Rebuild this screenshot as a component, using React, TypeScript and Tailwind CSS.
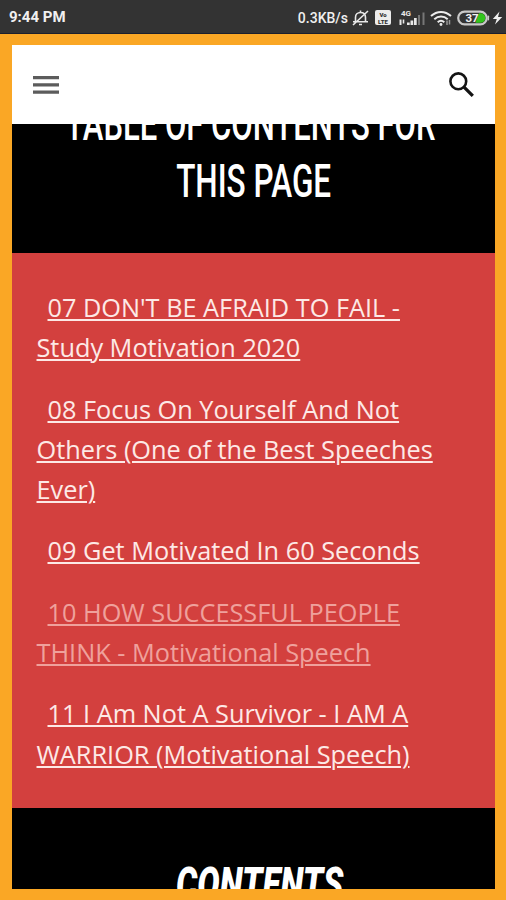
type Entry = { lines: string[]; visited?: boolean };

const entries: Entry[] = [
  { lines: ["07 DON'T BE AFRAID TO FAIL -", 'Study Motivation 2020'] },
  { lines: ['08 Focus On Yourself And Not', 'Others (One of the Best Speeches', 'Ever)'] },
  { lines: ['09 Get Motivated In 60 Seconds'] },
  { lines: ['10 HOW SUCCESSFUL PEOPLE', 'THINK - Motivational Speech'], visited: true },
  { lines: ['11 I Am Not A Survivor - I AM A', 'WARRIOR (Motivational Speech)'] },
];

function StatusBar() {
  return (
    <div className="flex h-[34px] shrink-0 items-center border-b border-[#1c1f2c] bg-[#333333] pl-[9px] pr-[3px] pt-[2px] font-[Roboto,sans-serif] text-[#f0f0f0]">
      <span className="text-[15px] font-bold leading-none">9:44 PM</span>
      <span className="ml-auto text-[14px] font-medium leading-none">0.3KB/s</span>
      <svg className="ml-[3px]" width="19" height="18" viewBox="0 0 19 18" fill="none" stroke="#e8e8e8" strokeWidth="1.6">
        <path d="M4.5 12.5V8.5c0-3 2-5 5-5s5 2 5 5v4M2 12.8h15M8 15.5h3M9.5 1.5v2M17 2L2 16" />
      </svg>
      <div className="ml-[5px] flex h-[15px] w-[16px] flex-col items-center justify-center rounded-[2px] bg-[#ececec] text-[6px] font-black leading-[7px] text-[#333333]">
        <span>Vo</span>
        <span>LTE</span>
      </div>
      <svg className="ml-[7px]" width="29" height="18" viewBox="0 0 29 18" fill="#e8e8e8">
        <text x="3" y="7" fontSize="8" fontWeight="700" fontFamily="Roboto">4G</text>
        <path d="M1.5 10.5h2V16h-2zM4.7 10.5h1.6v4H4.7zM9 13.5h2.7V16H9zM12.500 11.5h2.7V16h-2.700zM16 9h2.700v7H16z" />
        <path d="M20 6h2v10h-2zM24.500 3.5h2V16h-2z" fill="#777777" />
      </svg>
      <svg className="ml-[3px]" width="23" height="18" viewBox="0 0 23 18" fill="none" stroke="#ececec" strokeWidth="2">
        <path d="M1 7C7 1.5 15 1.5 21 7M4.3 10.2c3.9-3.5 9.5-3.5 13.4 0M7.7 13.2c2-1.8 4.6-1.8 6.6 0" />
        <circle cx="11" cy="15.5" r="1.4" fill="#ececec" stroke="none" />
        <path d="M17 11.5V16M19.5 15.5V11" stroke="#999999" strokeWidth="1.5" />
      </svg>
      <svg className="ml-[4px]" width="33" height="16" viewBox="0 0 33 16">
        <rect x="1.2" y="1.7" width="28.5" height="12.6" rx="6.3" fill="#333333" stroke="#c9c9c9" strokeWidth="2.2" />
        <path d="M22 3.2h1.5a4.8 4.8 0 0 1 0 9.6H18.5z" fill="#31c51b" />
        <rect x="30.5" y="5.5" width="1.6" height="5" rx=".8" fill="#c9c9c9" />
        <text x="8.5" y="12" fontSize="11.5" fontWeight="700" fontFamily="Roboto" fill="#f2f2f2">37</text>
      </svg>
      <svg className="ml-[2px]" width="11" height="14" viewBox="0 0 11 14" fill="#f0f0f0">
        <path d="M7.5.5L.8 8h4L3 13.5 10.2 6H6z" />
      </svg>
    </div>
  );
}

function AppBar() {
  return (
    <header className="flex h-[79px] shrink-0 items-center justify-between bg-white pl-[21px] pr-[20px]">
      <svg width="26" height="18" viewBox="0 0 26 18" fill="#5c5c5c">
        <path d="M0 0h26v3.2H0zM0 7.3h26v3.2H0zM0 14.5h26v3.2H0z" />
      </svg>
      <svg width="27" height="27" viewBox="0 0 27 27" fill="none" stroke="#141414">
        <circle cx="10.3" cy="10.3" r="7.9" strokeWidth="2.6" />
        <path d="M15.8 15.8l9 9" strokeWidth="3.3" />
      </svg>
    </header>
  );
}

export default function App() {
  return (
    <div className="flex h-[900px] w-[506px] flex-col overflow-hidden bg-[#faa725]">
      <StatusBar />
      <main className="mx-[12px] mb-[11px] mt-[11px] flex min-h-0 w-[483px] flex-1 flex-col overflow-hidden">
        <AppBar />
        <section className="flex h-[129px] shrink-0 flex-col items-center justify-end overflow-hidden bg-black pb-[44px] font-[Roboto,sans-serif] text-[47px] font-medium leading-[57px] text-white">
          <span className="mr-[7px] scale-x-[0.66] whitespace-nowrap">TABLE OF CONTENTS FOR</span>
          <span className="scale-x-[0.67] whitespace-nowrap">THIS PAGE</span>
        </section>
        <section className="flex h-[555px] shrink-0 flex-col gap-[21px] bg-[#d3403e] pl-[24.5px] pt-[34px] font-['Open_Sans',sans-serif] text-[25.3px] leading-[40.3px]">
          {entries.map((entry) => (
            <a
              key={entry.lines[0]}
              className={`whitespace-nowrap underline decoration-[2px] underline-offset-[2px] ${entry.visited ? 'text-[#efa19c]' : 'text-[#fde9e6]'}`}
            >
              {entry.lines.map((line, i) => (
                <span key={line} className={i === 0 ? 'ml-[11px] block' : 'block'}>
                  {line}
                </span>
              ))}
            </a>
          ))}
        </section>
        <section className="flex min-h-0 flex-1 justify-center overflow-hidden bg-black pl-[12px] pt-[47px] font-[Roboto,sans-serif] text-[47px] font-black italic leading-[57px] text-white">
          <span className="scale-x-[0.71] whitespace-nowrap">CONTENTS</span>
        </section>
      </main>
    </div>
  );
}
